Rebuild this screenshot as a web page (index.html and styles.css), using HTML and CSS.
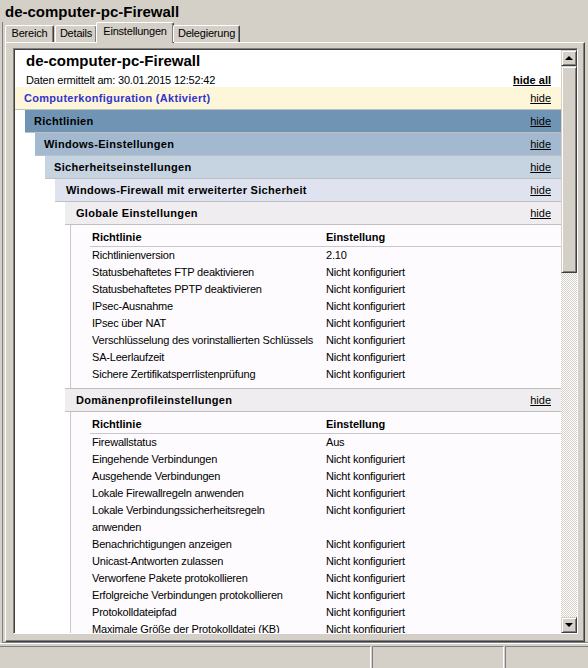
FILE: index.html
```html
<!DOCTYPE html>
<html lang="de">
<head>
<meta charset="utf-8">
<title>de-computer-pc-Firewall</title>
<link rel="stylesheet" href="styles.css">
</head>
<body>
<div class="window">
  <div class="apptitle">de-computer-pc-Firewall</div>
  <div class="main">
  <div class="tabs">
    <div class="tab t-bereich">Bereich</div>
    <div class="tab t-details">Details</div>
    <div class="tab t-einst active">Einstellungen</div>
    <div class="tab t-deleg">Delegierung</div>
  </div>
  <div class="panel">
    <div class="frame">
      <div class="content">
        <div class="rtitle">de-computer-pc-Firewall</div>
        <div class="rmeta"><span>Daten ermittelt am: 30.01.2015 12:52:42</span><span class="link bold">hide all</span></div>
        <div class="lvl">
          <div class="hrow h0"><span class="ht">Computerkonfiguration (Aktiviert)</span><span class="link">hide</span></div>
          <div class="lvl in">
            <div class="hrow h1"><span class="ht">Richtlinien</span><span class="link">hide</span></div>
            <div class="lvl in">
              <div class="hrow h2"><span class="ht">Windows-Einstellungen</span><span class="link">hide</span></div>
              <div class="lvl in">
                <div class="hrow h3"><span class="ht">Sicherheitseinstellungen</span><span class="link">hide</span></div>
                <div class="lvl in">
                  <div class="hrow h4 deep"><span class="ht">Windows-Firewall mit erweiterter Sicherheit</span><span class="link">hide</span></div>
                  <div class="lvl in">
                    <div class="hrow h5 deep"><span class="ht">Globale Einstellungen</span><span class="link">hide</span></div>
                    <div class="tblock">
                      <table class="ptable">
                        <colgroup><col class="c1"><col></colgroup>
                        <thead><tr><th>Richtlinie</th><th>Einstellung</th></tr></thead>
                        <tbody>
                          <tr><td>Richtlinienversion</td><td>2.10</td></tr>
                          <tr><td>Statusbehaftetes FTP deaktivieren</td><td>Nicht konfiguriert</td></tr>
                          <tr><td>Statusbehaftetes PPTP deaktivieren</td><td>Nicht konfiguriert</td></tr>
                          <tr><td>IPsec-Ausnahme</td><td>Nicht konfiguriert</td></tr>
                          <tr><td>IPsec über NAT</td><td>Nicht konfiguriert</td></tr>
                          <tr><td>Verschlüsselung des vorinstallierten Schlüssels</td><td>Nicht konfiguriert</td></tr>
                          <tr><td>SA-Leerlaufzeit</td><td>Nicht konfiguriert</td></tr>
                          <tr><td>Sichere Zertifikatsperrlistenprüfung</td><td>Nicht konfiguriert</td></tr>
                        </tbody>
                      </table>
                    </div>
                    <div class="hrow h5 deep topline"><span class="ht">Domänenprofileinstellungen</span><span class="link">hide</span></div>
                    <div class="tblock">
                      <table class="ptable">
                        <colgroup><col class="c1"><col></colgroup>
                        <thead><tr><th>Richtlinie</th><th>Einstellung</th></tr></thead>
                        <tbody>
                          <tr><td>Firewallstatus</td><td>Aus</td></tr>
                          <tr><td>Eingehende Verbindungen</td><td>Nicht konfiguriert</td></tr>
                          <tr><td>Ausgehende Verbindungen</td><td>Nicht konfiguriert</td></tr>
                          <tr><td>Lokale Firewallregeln anwenden</td><td>Nicht konfiguriert</td></tr>
                          <tr><td>Lokale Verbindungssicherheitsregeln<br>anwenden</td><td>Nicht konfiguriert<br>&nbsp;</td></tr>
                          <tr><td>Benachrichtigungen anzeigen</td><td>Nicht konfiguriert</td></tr>
                          <tr><td>Unicast-Antworten zulassen</td><td>Nicht konfiguriert</td></tr>
                          <tr><td>Verworfene Pakete protokollieren</td><td>Nicht konfiguriert</td></tr>
                          <tr><td>Erfolgreiche Verbindungen protokollieren</td><td>Nicht konfiguriert</td></tr>
                          <tr><td>Protokolldateipfad</td><td>Nicht konfiguriert</td></tr>
                          <tr><td>Maximale Größe der Protokolldatei (KB)</td><td>Nicht konfiguriert</td></tr>
                          <tr><td>&nbsp;</td><td>&nbsp;</td></tr>
                        </tbody>
                      </table>
                    </div>
                  </div>
                </div>
              </div>
            </div>
          </div>
        </div>
      </div>
      <div class="scrollbar">
        <div class="sbtn"><span class="arr up"></span></div>
        <div class="track">
          <div class="thumb"></div>
        </div>
        <div class="sbtn"><span class="arr down"></span></div>
      </div>
    </div>
  </div>
  </div>
</div>
<div class="status">
  <div class="sp sp1"></div>
  <div class="sp sp2"></div>
  <div class="sp sp3"></div>
</div>
</body>
</html>
```
FILE: styles.css
```css
html, body {
  margin: 0;
  padding: 0;
}
body {
  width: 588px;
  height: 668px;
  overflow: hidden;
  background: #d4d0c8;
  font-family: "Liberation Sans", Arial, sans-serif;
  font-size: 11px;
  color: #000;
}
.window {
  height: 643px;
}
.apptitle {
  font-size: 15px;
  font-weight: bold;
  line-height: 20px;
  padding: 2px 0 0 5px;
  height: 20px;
}
.main {
  margin-left: 2px;
  border-left: 1px solid #808080;
  border-bottom: 1px solid #808080;
}
.tabs {
  display: flex;
  align-items: flex-end;
  height: 20px;
  position: relative;
  z-index: 2;
}
.tab {
  box-sizing: border-box;
  height: 17px;
  line-height: 15px;
  text-align: center;
  letter-spacing: -0.2px;
  border-top: 1px solid #fff;
  border-left: 1px solid #fff;
  border-right: 1px solid #404040;
  box-shadow: inset -1px 0 0 #808080;
  border-top-left-radius: 2px;
  border-top-right-radius: 2px;
  background: #d4d0c8;
}
.t-bereich { margin-left: 2px; width: 49px; }
.t-details { margin-left: 1px; width: 42px; }
.t-einst { width: 78px; }
.t-deleg { width: 67px; }
.tab.active {
  height: 21px;
  line-height: 17px;
  margin-bottom: -1px;
  margin-left: -1px;
  margin-right: -1px;
}
.panel {
  box-sizing: border-box;
  margin-left: 2px;
  width: 580px;
  height: 600px;
  border-top: 1px solid #fff;
  border-left: 1px solid #fff;
  border-right: 1px solid #404040;
  border-bottom: 1px solid #404040;
  box-shadow: inset -1px -1px 0 #808080;
  padding: 5px 6px 7px 7px;
}
.frame {
  box-sizing: border-box;
  height: 586px;
  border-top: 1px solid #808080;
  border-left: 1px solid #808080;
  border-right: 1px solid #fff;
  border-bottom: 1px solid #fff;
  box-shadow: inset 1px 1px 0 #404040;
  padding: 1px 0 0 1px;
  display: flex;
  background: #fff;
}
.content {
  flex: 1;
  min-width: 0;
  overflow: hidden;
  background: #fff;
}
.rtitle {
  font-size: 15px;
  font-weight: bold;
  line-height: 16px;
  padding: 3px 0 0 11px;
}
.rmeta {
  display: flex;
  justify-content: space-between;
  line-height: 13px;
  padding: 5px 10px 0 11px;
  letter-spacing: -0.2px;
}
.link {
  text-decoration: underline;
  letter-spacing: 0;
}
.bold { font-weight: bold; }
.lvl.in {
  margin-left: 10px;
}
.hrow {
  display: flex;
  justify-content: space-between;
  height: 22px;
  line-height: 22px;
  border-bottom: 1px solid #c0c0c0;
  padding: 0 10px 0 9px;
}
.hrow .ht {
  font-weight: bold;
  letter-spacing: 0.3px;
}
.hrow.deep { padding-left: 11px; }
.hrow.topline { border-top: 1px solid #c0c0c0; }
.h0 { background: #fef6d9; }
.h0 .ht { color: #3333cc; }
.h1 { background: #7094b4; }
.h2 { background: #a3b9cf; }
.h3 { background: #c6d3e0; }
.h4 { background: #dee3ef; }
.h5 { background: #efedf0; }
.tblock {
  margin-left: 5px;
  border-left: 1px solid #c8c8c8;
  padding: 0 0 5px 19px;
  background: #fdfbfd;
}
.ptable {
  width: 100%;
  border-collapse: collapse;
  table-layout: fixed;
}
.ptable col.c1 { width: 234px; }
.ptable th {
  text-align: left;
  font-weight: bold;
  padding: 3px 2px 0 2px;
  line-height: 18px;
  border-bottom: 1px solid #c8c8c8;
}
.ptable td {
  padding: 0 2px;
  line-height: 17px;
  white-space: nowrap;
  letter-spacing: -0.2px;
  vertical-align: top;
}
.scrollbar {
  width: 16px;
  display: flex;
  flex-direction: column;
}
.sbtn {
  box-sizing: border-box;
  height: 16px;
  background: #d4d0c8;
  border-top: 1px solid #d4d0c8;
  border-left: 1px solid #d4d0c8;
  border-right: 1px solid #404040;
  border-bottom: 1px solid #404040;
  box-shadow: inset 1px 1px 0 #fff, inset -1px -1px 0 #808080;
  display: flex;
  align-items: center;
  justify-content: center;
}
.arr {
  width: 0;
  height: 0;
  border-left: 4px solid transparent;
  border-right: 4px solid transparent;
}
.arr.up { border-bottom: 4px solid #000; margin-top: -1px; }
.arr.down { border-top: 4px solid #000; }
.track {
  flex: 1;
  background: repeating-conic-gradient(#d4d0c8 0 25%, #fff 0 50%) 0 0 / 2px 2px;
}
.thumb {
  box-sizing: border-box;
  height: 207px;
  background: #d4d0c8;
  border-top: 1px solid #d4d0c8;
  border-left: 1px solid #d4d0c8;
  border-right: 1px solid #404040;
  border-bottom: 1px solid #404040;
  box-shadow: inset 1px 1px 0 #fff, inset -1px -1px 0 #808080;
}
.status {
  box-sizing: border-box;
  height: 25px;
  box-shadow: inset 0 1px 0 #fff;
  padding-top: 3px;
  display: flex;
}
.sp {
  box-sizing: border-box;
  height: 22px;
  border-top: 1px solid #808080;
  border-left: 1px solid #808080;
  border-right: 1px solid #fff;
}
.sp1 { width: 371px; border-left: none; }
.sp2 { width: 132px; margin-left: 1px; }
.sp3 { flex: 1; margin-left: 1px; border-right: none; }
```
